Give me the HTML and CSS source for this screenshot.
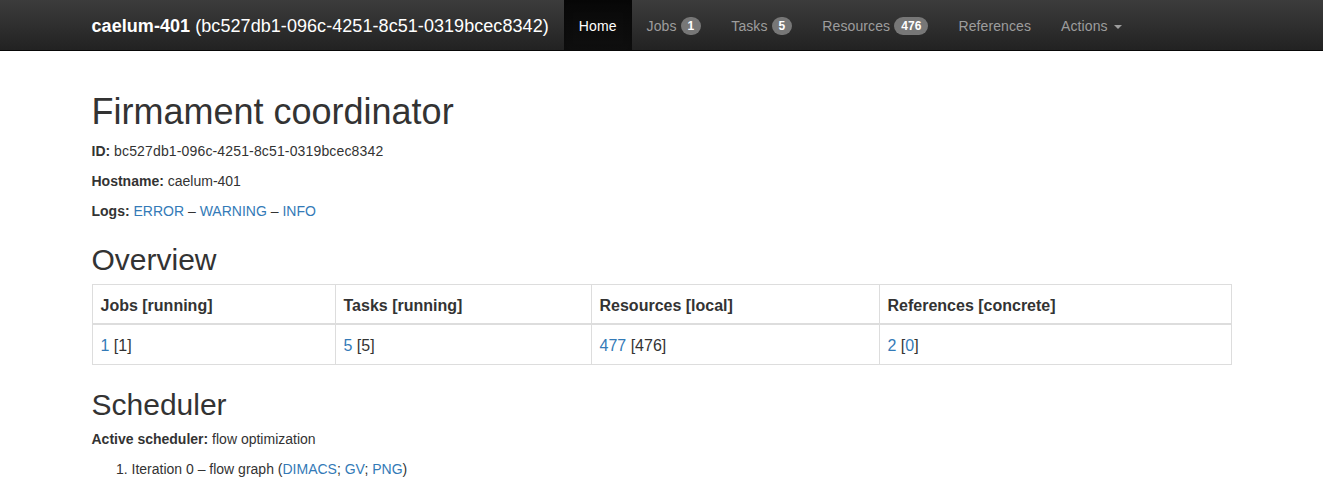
FILE: index.html
```html
<!DOCTYPE html>
<html lang="en">
<head>
<meta charset="utf-8">
<title>Firmament coordinator</title>
<link rel="stylesheet" href="styles.css">
</head>
<body>
<nav class="navbar">
  <div class="navbar-inner">
    <a class="brand" href="#"><b>caelum-401</b> (bc527db1-096c-4251-8c51-0319bcec8342)</a>
    <ul class="nav">
      <li class="active"><a href="#">Home</a></li>
      <li><a href="#">Jobs <span class="badge">1</span></a></li>
      <li><a href="#">Tasks <span class="badge">5</span></a></li>
      <li><a href="#">Resources <span class="badge">476</span></a></li>
      <li><a href="#">References</a></li>
      <li><a href="#">Actions <span class="caret"></span></a></li>
    </ul>
  </div>
</nav>
<main class="container">
  <h1>Firmament coordinator</h1>
  <p><b>ID:</b> <span class="uuid">bc527db1-096c-4251-8c51-0319bcec8342</span></p>
  <p><b>Hostname:</b> caelum-401</p>
  <p><b>Logs:</b> <a href="#">ERROR</a> &ndash; <a href="#">WARNING</a> &ndash; <a href="#">INFO</a></p>
  <h2>Overview</h2>
  <table class="table">
    <colgroup>
      <col class="col-jobs">
      <col class="col-tasks">
      <col class="col-res">
      <col class="col-refs">
    </colgroup>
    <thead>
      <tr>
        <th>Jobs [running]</th>
        <th>Tasks [running]</th>
        <th>Resources [local]</th>
        <th>References [concrete]</th>
      </tr>
    </thead>
    <tbody>
      <tr>
        <td><a href="#">1</a> [1]</td>
        <td><a href="#">5</a> [5]</td>
        <td><a href="#">477</a> [476]</td>
        <td><a href="#">2</a> [<a href="#">0</a>]</td>
      </tr>
    </tbody>
  </table>
  <h2>Scheduler</h2>
  <p><b>Active scheduler:</b> flow optimization</p>
  <ol>
    <li>Iteration 0 &ndash; flow graph (<a href="#">DIMACS</a>; <a href="#">GV</a>; <a href="#">PNG</a>)</li>
  </ol>
</main>
</body>
</html>
```
FILE: styles.css
```css
* { box-sizing: border-box; }
html, body {
  margin: 0;
  padding: 0;
}
body {
  font-family: "Liberation Sans", Arial, Helvetica, sans-serif;
  font-size: 14px;
  line-height: 1.42857143;
  color: #333;
  background: #fff;
}
a { color: #337ab7; text-decoration: none; }

.navbar {
  height: 51px;
  background: linear-gradient(to bottom, #3c3c3c 0, #222 100%);
  border-bottom: 1px solid #080808;
}
.navbar-inner {
  width: 1170px;
  margin: 0 auto;
  display: flex;
  align-items: stretch;
  height: 50px;
}
.brand {
  display: block;
  padding: 16px 15px 14px;
  font-size: 18px;
  line-height: 20px;
  height: 50px;
  color: #fff;
  letter-spacing: 0.06px;
}
.brand b { font-weight: 700; }
.nav {
  list-style: none;
  margin: 0;
  padding: 0;
  display: flex;
}
.nav li a {
  display: block;
  padding: 16px 15px 14px;
  line-height: 20px;
  color: #9d9d9d;
  height: 50px;
  letter-spacing: 0.1px;
}
.nav li.active a {
  color: #fff;
  background: linear-gradient(to bottom, #080808 0, #0f0f0f 100%);
  box-shadow: inset 0 3px 9px rgba(0,0,0,.25);
}
.badge {
  display: inline-block;
  min-width: 10px;
  padding: 3px 7px;
  font-size: 12px;
  font-weight: 700;
  line-height: 1;
  color: #fff;
  text-align: center;
  white-space: nowrap;
  vertical-align: middle;
  background-color: #777;
  border-radius: 10px;
  position: relative;
  top: -1px;
}
.caret {
  display: inline-block;
  width: 0;
  height: 0;
  margin-left: 2px;
  vertical-align: middle;
  border-top: 4px solid;
  border-right: 4px solid transparent;
  border-left: 4px solid transparent;
}

.container {
  width: 1170px;
  margin: 0 auto;
  padding: 19px 15px 0;
}
h1, h2 {
  font-family: inherit;
  font-weight: 500;
  line-height: 1.1;
  color: inherit;
  margin-top: 20px;
  margin-bottom: 10px;
}
h1 {
  font-size: 36px;
  padding-top: 2px;
  margin-bottom: 9px;
}
h2 {
  font-size: 30px;
  padding-top: 2px;
  margin-bottom: 8px;
}
p { margin: 0 0 10px; }
b { font-weight: 700; }
.uuid { letter-spacing: 0.15px; }

.table {
  width: 100%;
  max-width: 100%;
  margin-bottom: 21px;
  border-collapse: collapse;
  border-spacing: 0;
  border: 1px solid #ddd;
  table-layout: fixed;
  font-size: 16px;
}
.col-jobs { width: 243px; }
.col-tasks { width: 256px; }
.col-res { width: 288px; }
.col-refs { width: auto; }
.table th, .table td {
  padding: 10px 8px 6px;
  line-height: 1.42857143;
  vertical-align: top;
  border: 1px solid #ddd;
  text-align: left;
}
.table thead th {
  vertical-align: bottom;
  border-bottom-width: 2px;
  font-weight: 700;
}

ol {
  margin: 0 0 10px;
  padding-left: 40px;
}
```
